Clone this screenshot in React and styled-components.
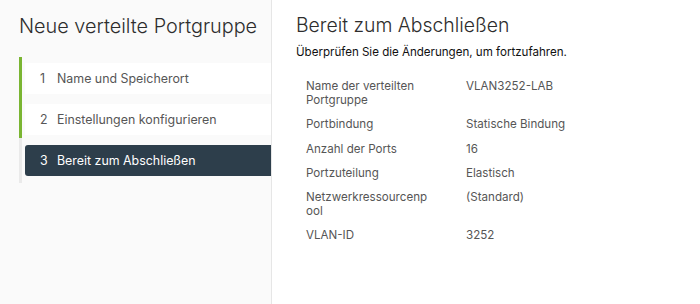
import React from "react";
import styled, { createGlobalStyle } from "styled-components";

const Global = createGlobalStyle`
  html, body { margin: 0; padding: 0; background: #fff; }
  body { font-family: Inter, "Noto Sans", sans-serif; -webkit-font-smoothing: antialiased; }
  * { box-sizing: border-box; }
`;

const Page = styled.div`
  display: flex;
  width: 700px;
  height: 304px;
  overflow: hidden;
`;

const Sidebar = styled.nav`
  width: 272px;
  flex: none;
  background: #fafafa;
  border-right: 1px solid #e6e6e6;
  padding: 13px 0 0 19px;
`;

const WizardTitle = styled.h1`
  margin: 0;
  font-size: 19.85px;
  line-height: 26px;
  font-weight: 300;
  color: #2d2d2d;
`;

const Steps = styled.ol`
  list-style: none;
  margin: 18px 0 0 0;
  padding: 6px 0 0 0;
  display: flex;
  flex-direction: column;
  gap: 10px;
  border-left: 3px solid #eaeaea;
  position: relative;
  height: 126px;
`;

const Progress = styled.span`
  position: absolute;
  left: -3px;
  top: 0;
  width: 3px;
  height: 81px;
  background: #7ab532;
`;

const Step = styled.li`
  margin-left: 3px;
  height: 31px;
  display: flex;
  align-items: center;
  padding-left: 15px;
  font-size: 12.4px;
  color: ${(p) => (p.$active ? "#fff" : "#565656")};
  background: ${(p) => (p.$active ? "#2d3e4b" : "#fff")};
  border-radius: ${(p) => (p.$active ? "3px 0 0 3px" : "0")};
`;

const StepNum = styled.span`
  width: 17px;
  flex: none;
`;

const Main = styled.main`
  flex: 1;
  padding: 12px 0 0 24px;
`;

const Title = styled.h2`
  margin: 0;
  font-size: 19.4px;
  line-height: 26px;
  font-weight: 300;
  color: #2d2d2d;
`;

const Subtitle = styled.p`
  margin: 6px 0 0 0;
  font-size: 11.6px;
  letter-spacing: -0.02px;
  line-height: 16px;
  color: #111;
`;

const Summary = styled.dl`
  margin: 19px 0 0 10px;
  display: grid;
  grid-template-columns: 160px auto;
  row-gap: 10.3px;
  font-size: 11.6px;
  line-height: 14px;
  color: #565656;
`;

const Label = styled.dt`
  margin: 0;
  width: 123px;
  overflow-wrap: anywhere;
`;

const Value = styled.dd`
  margin: 0;
`;

const rows = [
  ["Name der verteilten Portgruppe", "VLAN3252-LAB"],
  ["Portbindung", "Statische Bindung"],
  ["Anzahl der Ports", "16"],
  ["Portzuteilung", "Elastisch"],
  ["Netzwerkressourcenpool", "(Standard)"],
  ["VLAN-ID", "3252"],
];

const steps = ["Name und Speicherort", "Einstellungen konfigurieren", "Bereit zum Abschließen"];

export default function App() {
  return (
    <>
      <Global />
      <Page>
        <Sidebar>
          <WizardTitle>Neue verteilte Portgruppe</WizardTitle>
          <Steps>
            <Progress />
            {steps.map((s, i) => (
              <Step key={s} $active={i === 2}>
                <StepNum>{i + 1}</StepNum>
                {s}
              </Step>
            ))}
          </Steps>
        </Sidebar>
        <Main>
          <Title>Bereit zum Abschließen</Title>
          <Subtitle>Überprüfen Sie die Änderungen, um fortzufahren.</Subtitle>
          <Summary>
            {rows.map(([l, v]) => (
              <React.Fragment key={l}>
                <Label>{l === "Name der verteilten Portgruppe" ? <>Name der verteilten<br />Portgruppe</> : l}</Label>
                <Value>{v}</Value>
              </React.Fragment>
            ))}
          </Summary>
        </Main>
      </Page>
    </>
  );
}
